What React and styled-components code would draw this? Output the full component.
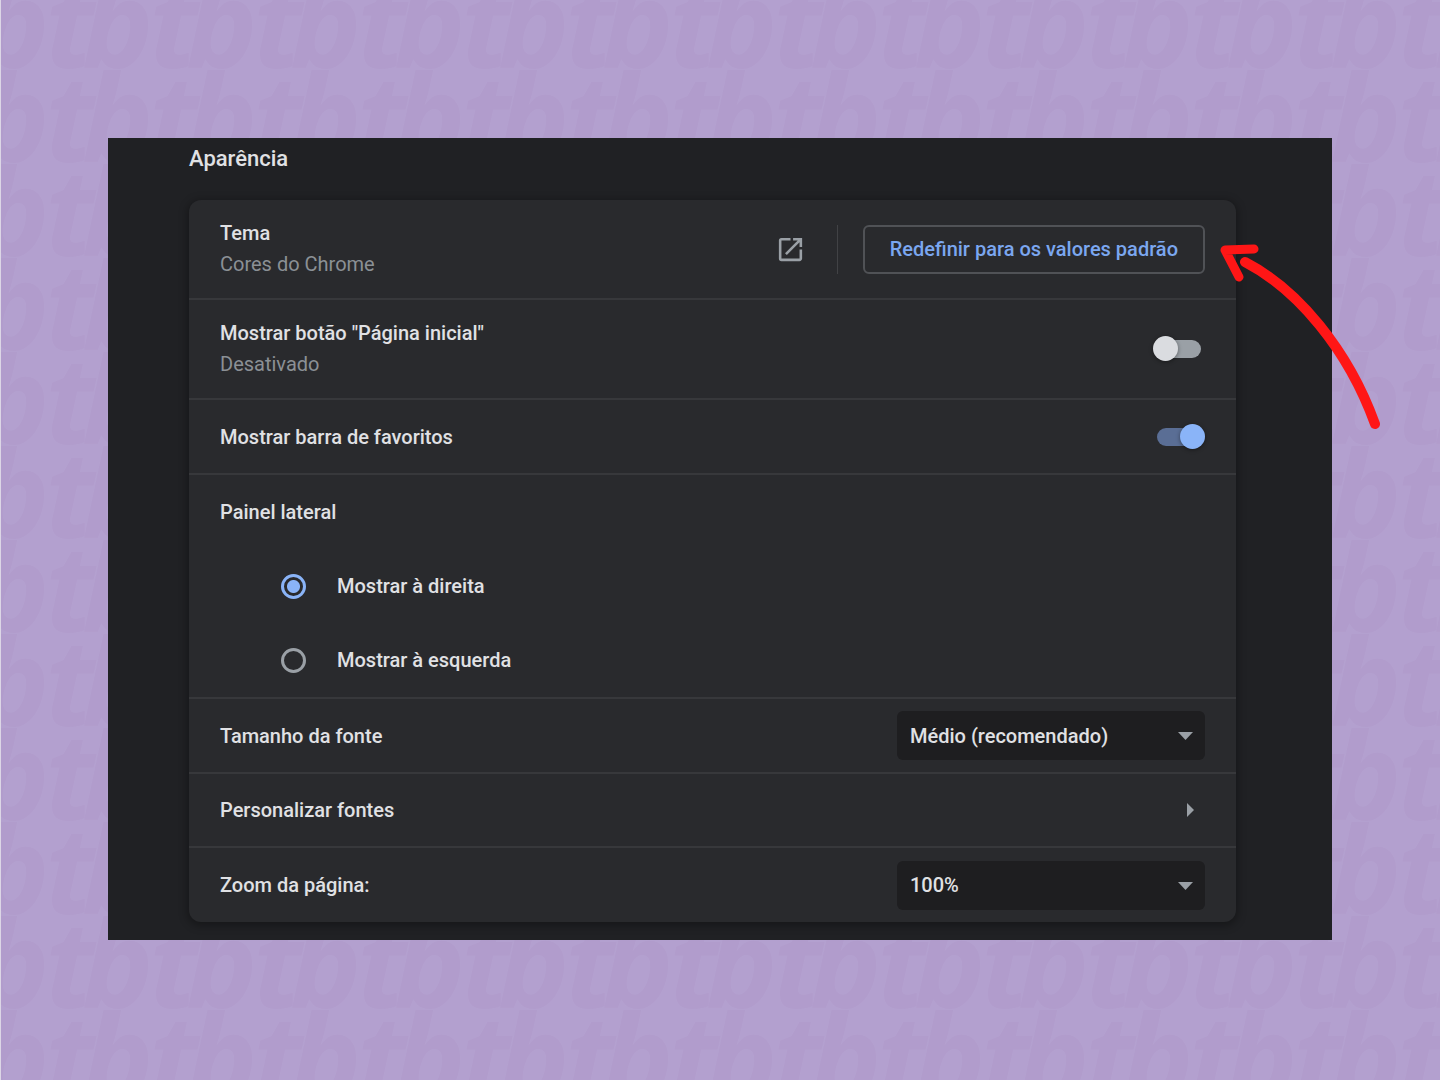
import { useState } from "react";
import styled, { createGlobalStyle } from "styled-components";

const GlobalStyle = createGlobalStyle`
  * {
    box-sizing: border-box;
  }

  body {
    margin: 0;
    background: #b3a0cf;
    font-family: Roboto, "Liberation Sans", sans-serif;
  }
`;

const Page = styled.div`
  position: relative;
  min-height: 100vh;
  padding: 138px 7.5% 139px;
  background: #b3a0cf;
  overflow: hidden;
`;

const Wallpaper = styled.svg`
  position: absolute;
  inset: 0;
  width: 100%;
  height: 100%;
  border-left: 1px solid #dcd6e6;
`;

const Letter = styled.text`
  font-family: "Open Sans", sans-serif;
  font-size: 120px;
  font-weight: 700;
  font-style: italic;
  fill: #b19ccc;
`;

const Panel = styled.main`
  position: relative;
  padding: 8px 96px 18px 81px;
  background: #202124;
`;

const Title = styled.h1`
  margin: 0 0 28px;
  font-size: 22px;
  font-weight: 500;
  line-height: 26px;
  color: #e0e1e4;
`;

const Card = styled.section`
  border-radius: 12px;
  background: #292a2d;
  box-shadow: 0 2px 8px 2px rgba(0, 0, 0, 0.3);
`;

const Row = styled.div`
  display: flex;
  align-items: center;
  justify-content: space-between;
  min-height: ${({ $tall }) => ($tall ? "100px" : "75px")};
  padding: 0 31px;
  border-bottom: 2px solid #37383b;

  &:nth-last-child(-n + 2) {
    min-height: 74px;
  }

  &:last-child {
    border-bottom: 0;
  }
`;

const Label = styled.label`
  display: block;
  font-size: 20px;
  font-weight: 500;
  line-height: 30px;
  color: #e0e1e4;
`;

const Note = styled.div`
  font-size: 20px;
  line-height: 32px;
  color: #8b9095;
`;

const Actions = styled.div`
  display: flex;
  align-items: center;
`;

const IconLink = styled.a`
  display: flex;
  color: #9aa0a6;
`;

const Divider = styled.span`
  width: 1px;
  height: 49px;
  margin: 0 25px 0 31px;
  background: #414245;
`;

const ResetBox = styled.div`
  position: relative;
`;

const ResetButton = styled.button`
  height: 49px;
  padding: 0 25px;
  border: 2px solid #505256;
  border-radius: 6px;
  background: transparent;
  font-family: inherit;
  font-size: 20px;
  font-weight: 500;
  color: #7ba7f0;
  cursor: pointer;
`;

const Arrow = styled.svg`
  position: absolute;
  top: 0;
  left: 100%;
  width: 180px;
  height: 210px;
  pointer-events: none;
`;

const Switch = styled.input`
  appearance: none;
  position: relative;
  width: 44px;
  height: 18px;
  margin: 0 4px;
  border-radius: 9px;
  background: #9aa0a6;
  cursor: pointer;

  &::before {
    content: "";
    position: absolute;
    top: -4px;
    left: -4px;
    width: 25px;
    height: 25px;
    border-radius: 50%;
    background: #dadce0;
    box-shadow: 0 1px 4px rgba(0, 0, 0, 0.4);
  }

  &:checked {
    background: #5a6e95;
  }

  &:checked::before {
    left: 23px;
    background: #8ab4f8;
  }
`;

const RadioGroup = styled.fieldset`
  margin: 0;
  padding: 0 31px;
  border: 0;
  border-bottom: 2px solid #37383b;
`;

const Legend = styled.legend`
  padding: 0;
  font-size: 20px;
  font-weight: 500;
  line-height: 74px;
  color: #e0e1e4;
`;

const RadioRow = styled.div`
  display: flex;
  align-items: center;
  gap: 31px;
  height: 74px;
  padding-left: 61px;
`;

const Radio = styled.input`
  appearance: none;
  width: 25px;
  height: 25px;
  margin: 0;
  border: 3px solid #9aa0a6;
  border-radius: 50%;
  cursor: pointer;

  &:checked {
    border-color: #8ab4f8;
    background: radial-gradient(circle, #8ab4f8 6px, transparent 7px);
  }
`;

const SelectBox = styled.div`
  position: relative;
  width: 308px;
  color: #9aa0a6;

  svg {
    position: absolute;
    top: 21px;
    right: 12px;
    pointer-events: none;
  }
`;

const Select = styled.select`
  appearance: none;
  width: 100%;
  height: 49px;
  padding: 0 40px 0 13px;
  border: 0;
  border-radius: 6px;
  background: #1e1e20;
  font-family: inherit;
  font-size: 20px;
  font-weight: 500;
  color: #e0e1e4;
`;

const FontsButton = styled.button`
  display: flex;
  align-items: center;
  justify-content: space-between;
  width: 100%;
  padding: 0 11px 0 0;
  border: 0;
  background: transparent;
  font-family: inherit;
  font-size: 20px;
  font-weight: 500;
  line-height: 30px;
  color: #e0e1e4;
  cursor: pointer;

  svg {
    color: #9aa0a6;
  }
`;

const DownIcon = () => (
  <svg width="15" height="8" viewBox="0 0 15 8" aria-hidden="true">
    <path d="M0 0h15L7.5 8z" fill="currentColor" />
  </svg>
);

const Dropdown = ({ id, options }) => (
  <SelectBox>
    <Select id={id}>
      {options.map((option) => (
        <option key={option}>{option}</option>
      ))}
    </Select>
    <DownIcon />
  </SelectBox>
);

const App = () => {
  const [homeButton, setHomeButton] = useState(false);
  const [bookmarks, setBookmarks] = useState(true);
  const [side, setSide] = useState("direita");

  return (
    <Page>
      <GlobalStyle />
      <Wallpaper aria-hidden="true">
        <defs>
          {/* b is repeated one tile over so it isn't cut at the edge */}
          <pattern id="tb" width="104" height="94" patternUnits="userSpaceOnUse">
            {[68, 162].map((y) => (
              <g key={y}>
                <Letter x="44" y={y}>t</Letter>
                <Letter x="-23" y={y}>b</Letter>
                <Letter x="81" y={y}>b</Letter>
              </g>
            ))}
          </pattern>
        </defs>
        <rect width="100%" height="100%" fill="url(#tb)" />
      </Wallpaper>

      <Panel>
        <Title>Aparência</Title>
        <Card>
          <Row $tall>
            <div>
              <Label as="div">Tema</Label>
              <Note>Cores do Chrome</Note>
            </div>
            <Actions>
              <IconLink href="#tema" aria-label="Abrir temas">
                <svg width="31" height="31" viewBox="0 0 24 24" fill="currentColor">
                  <path d="M19 19H5V5h7V3H5a2 2 0 0 0-2 2v14a2 2 0 0 0 2 2h14c1.1 0 2-.9 2-2v-7h-2v7zM14 3v2h3.59l-9.83 9.83 1.41 1.41L19 6.41V10h2V3h-7z" />
                </svg>
              </IconLink>
              <Divider />
              <ResetBox>
                <ResetButton type="button">Redefinir para os valores padrão</ResetButton>
                <Arrow viewBox="0 0 180 210" fill="none" stroke="#ff1616" strokeLinecap="round" strokeLinejoin="round" aria-hidden="true">
                  <path d="M49 24L20 25L34 52" strokeWidth="9" />
                  <path d="M40 37C92 64 143 124 170 199" strokeWidth="10" />
                </Arrow>
              </ResetBox>
            </Actions>
          </Row>

          <Row $tall>
            <div>
              <Label htmlFor="home">Mostrar botão "Página inicial"</Label>
              <Note>{homeButton ? "Ativado" : "Desativado"}</Note>
            </div>
            <Switch id="home" type="checkbox" checked={homeButton} onChange={(e) => setHomeButton(e.target.checked)} />
          </Row>

          <Row>
            <Label htmlFor="bookmarks">Mostrar barra de favoritos</Label>
            <Switch id="bookmarks" type="checkbox" checked={bookmarks} onChange={(e) => setBookmarks(e.target.checked)} />
          </Row>

          <RadioGroup>
            <Legend>Painel lateral</Legend>
            {["direita", "esquerda"].map((value) => (
              <RadioRow key={value}>
                <Radio id={value} type="radio" name="side" checked={side === value} onChange={() => setSide(value)} />
                <Label htmlFor={value}>Mostrar à {value}</Label>
              </RadioRow>
            ))}
          </RadioGroup>

          <Row>
            <Label htmlFor="font-size">Tamanho da fonte</Label>
            <Dropdown id="font-size" options={["Médio (recomendado)"]} />
          </Row>

          <Row>
            <FontsButton type="button">
              Personalizar fontes
              <svg width="7" height="14" viewBox="0 0 7 14" aria-hidden="true">
                <path d="M0 0v14l7-7z" fill="currentColor" />
              </svg>
            </FontsButton>
          </Row>

          <Row>
            <Label htmlFor="zoom">Zoom da página:</Label>
            <Dropdown id="zoom" options={["100%"]} />
          </Row>
        </Card>
      </Panel>
    </Page>
  );
};

export default App;
